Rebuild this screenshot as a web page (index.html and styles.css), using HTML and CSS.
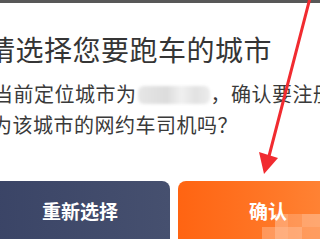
FILE: index.html
```html
<!DOCTYPE html>
<html lang="zh">
<head>
<meta charset="utf-8">
<link rel="stylesheet" href="styles.css">
</head>
<body>
<div class="screen">
  <div class="topbar"></div>
  <div class="dialog">
    <h1 class="title">请选择您要跑车的城市</h1>
    <p class="message">当前定位城市为<span class="masked"></span>，确认要注册<br>为该城市的网约车司机吗？</p>
    <div class="actions">
      <button class="btn btn-secondary">重新选择</button>
      <button class="btn btn-primary">确认</button>
    </div>
  </div>
  <svg class="annotation" width="320" height="240" viewBox="0 0 320 240">
    <line x1="310" y1="-2" x2="268" y2="160" stroke="#f12b30" stroke-width="3" stroke-linecap="round"/>
    <polygon points="264,174 259,152 278,158" fill="#f12b30"/>
  </svg>
  <svg class="mosaic" width="60" height="26" viewBox="0 0 60 26">
    <rect x="0" y="13" width="13" height="13" fill="#fff" opacity="0.25"/>
    <rect x="13" y="0" width="13" height="13" fill="#fff" opacity="0.3"/>
    <rect x="13" y="13" width="13" height="13" fill="#fff" opacity="0.4"/>
    <rect x="26" y="0" width="14" height="13" fill="#fff" opacity="0.2"/>
    <rect x="26" y="13" width="14" height="13" fill="#fff" opacity="0.35"/>
    <rect x="40" y="0" width="20" height="13" fill="#fff" opacity="0.3"/>
    <rect x="40" y="13" width="20" height="13" fill="#fff" opacity="0.22"/>
  </svg>
</div>
</body>
</html>
```

FILE: styles.css
```css
html, body {
  margin: 0;
  padding: 0;
  background: #ffffff;
}
body {
  width: 320px;
  height: 240px;
  overflow: hidden;
  font-family: "Noto Sans CJK SC", "Noto Sans", sans-serif;
}
.screen {
  position: relative;
  width: 320px;
  height: 240px;
  overflow: hidden;
}
.topbar {
  height: 3px;
  background: #585858;
}
.dialog {
  display: flex;
  flex-direction: column;
}
.title {
  margin: 32px 0 0 -13px;
  font-size: 28px;
  line-height: 28px;
  font-weight: 400;
  letter-spacing: 0.5px;
  color: #353535;
  white-space: nowrap;
}
.message {
  margin: 15px 0 0 -8px;
  font-size: 20px;
  line-height: 31px;
  letter-spacing: 0.5px;
  color: #3a3a3a;
  white-space: nowrap;
  text-indent: 1px;
}
.masked {
  display: inline-block;
  width: 72px;
  height: 18px;
  margin: 0 1px 0 1px;
  vertical-align: -2px;
  border-radius: 6px;
  background: linear-gradient(90deg, #e6e6e6 0%, #dcdcdc 40%, #f0f0f0 60%, #e2e2e2 80%, #ececec 100%);
  filter: blur(1.5px);
}
.actions {
  margin: 41px 0 0 -10px;
  width: 371px;
  display: flex;
  gap: 8px;
}
.btn {
  flex: 0 0 180px;
  height: 58px;
  border: 0;
  padding: 0;
  font-family: "Noto Sans CJK SC", "Noto Sans", sans-serif;
  font-size: 19px;
  font-weight: 700;
  color: #ffffff;
  display: flex;
  align-items: center;
  justify-content: center;
}
.btn-secondary {
  border-radius: 0 8px 0 0;
  background: linear-gradient(90deg, #3a4466 0%, #46506f 100%);
}
.btn-primary {
  border-radius: 8px 0 0 0;
  background: linear-gradient(90deg, #ff6412 0%, #ff7a2a 60%, #ff8b3e 100%);
}
.annotation {
  position: absolute;
  left: 0;
  top: 0;
  pointer-events: none;
}
.mosaic {
  position: absolute;
  left: 262px;
  top: 214px;
  pointer-events: none;
}
```
